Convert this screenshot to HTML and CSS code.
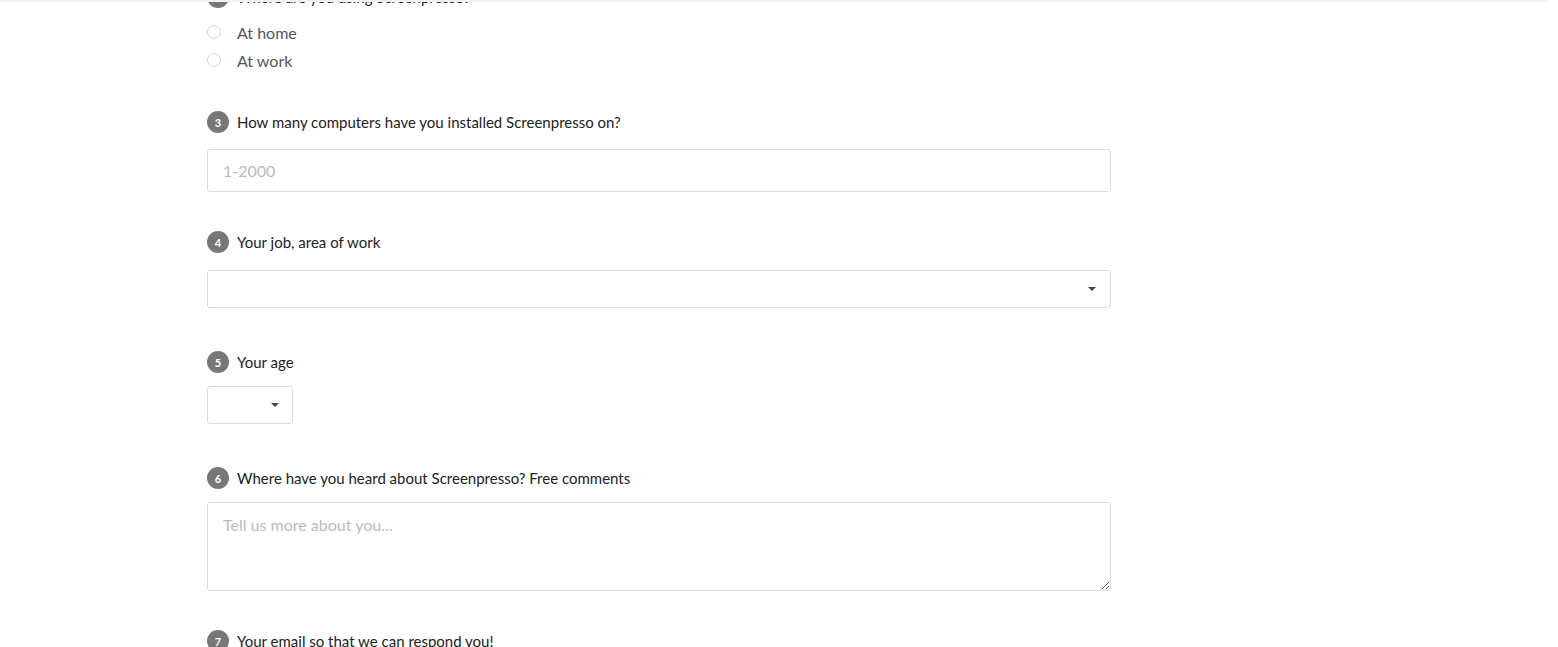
FILE: index.html
```html
<!DOCTYPE html>
<html>
<head>
<meta charset="utf-8">
<link rel="stylesheet" href="styles.css">
</head>
<body>
<div class="topshadow"></div>
<form class="survey">
  <div class="q q2">
    <div class="qlabel"><span class="badge">2</span><span class="qtext">Where are you using Screenpresso?</span></div>
    <div class="radios">
      <label class="radio"><span class="dot"></span><span>At home</span></label>
      <label class="radio"><span class="dot"></span><span>At work</span></label>
    </div>
  </div>
  <div class="q q3">
    <div class="qlabel"><span class="badge">3</span><span class="qtext">How many computers have you installed Screenpresso on?</span></div>
    <input class="field input" type="text" placeholder="1-2000">
  </div>
  <div class="q q4">
    <div class="qlabel"><span class="badge">4</span><span class="qtext">Your job, area of work</span></div>
    <div class="field select wide"><span class="caret"></span></div>
  </div>
  <div class="q q5">
    <div class="qlabel"><span class="badge">5</span><span class="qtext">Your age</span></div>
    <div class="field select small"><span class="caret"></span></div>
  </div>
  <div class="q q6">
    <div class="qlabel"><span class="badge">6</span><span class="qtext">Where have you heard about Screenpresso? Free comments</span></div>
    <textarea class="field textarea" placeholder="Tell us more about you..."></textarea>
  </div>
  <div class="q q7">
    <div class="qlabel"><span class="badge">7</span><span class="qtext">Your email so that we can respond you!</span></div>
  </div>
</form>
</body>
</html>
```
FILE: styles.css
```css
html, body {
  margin: 0;
  padding: 0;
  background: #fff;
  overflow: hidden;
  height: 647px;
}
body {
  font-family: Lato, "Open Sans", sans-serif;
  color: #333;
}
.topshadow {
  position: fixed;
  top: 0;
  left: 0;
  width: 1548px;
  height: 2px;
  background: #f1f1f1;
  z-index: 5;
}
.survey {
  padding-left: 207px;
  width: 904px;
  margin-top: -14px;
  display: flex;
  flex-direction: column;
}
.qlabel {
  display: flex;
  align-items: center;
  gap: 8px;
  height: 22px;
}
.badge {
  width: 22px;
  height: 22px;
  border-radius: 50%;
  background: #777;
  color: #fff;
  font-size: 11px;
  font-weight: 700;
  display: flex;
  align-items: center;
  justify-content: center;
  flex: none;
}
.qtext {
  font-size: 15px;
  color: #222;
  line-height: 22px;
}
.radios {
  margin-top: 10px;
  display: flex;
  flex-direction: column;
}
.radio {
  display: flex;
  align-items: center;
  gap: 16px;
  height: 28px;
  font-size: 16px;
  color: #555;
}
.dot {
  width: 14px;
  height: 14px;
  border: 1px solid #d4d4d4;
  border-radius: 50%;
  box-sizing: border-box;
  flex: none;
}
.q3 { margin-top: 37px; }
.q4 { margin-top: 39px; }
.q5 { margin-top: 43px; }
.q6 { margin-top: 43px; }
.q7 { margin-top: 39px; }
.field {
  box-sizing: border-box;
  border: 1px solid #dcdcdc;
  border-radius: 3px;
  background: #fff;
  font-family: Lato, "Open Sans", sans-serif;
  font-size: 16px;
  color: #555;
}
.field::placeholder { color: #bbb; }
.input {
  display: block;
  width: 904px;
  height: 43px;
  margin-top: 16px;
  padding: 0 15px;
  outline: none;
}
.select {
  height: 38px;
  display: flex;
  align-items: center;
  justify-content: flex-end;
}
.wide {
  width: 904px;
  margin-top: 17px;
  padding-right: 14px;
}
.small {
  width: 86px;
  margin-top: 13px;
  padding-right: 13px;
}
.caret {
  width: 0;
  height: 0;
  border-left: 4px solid transparent;
  border-right: 4px solid transparent;
  border-top: 4px solid #444;
}
.textarea {
  display: block;
  width: 904px;
  height: 89px;
  margin-top: 13px;
  padding: 12px 15px;
  resize: vertical;
  outline: none;
}
```
